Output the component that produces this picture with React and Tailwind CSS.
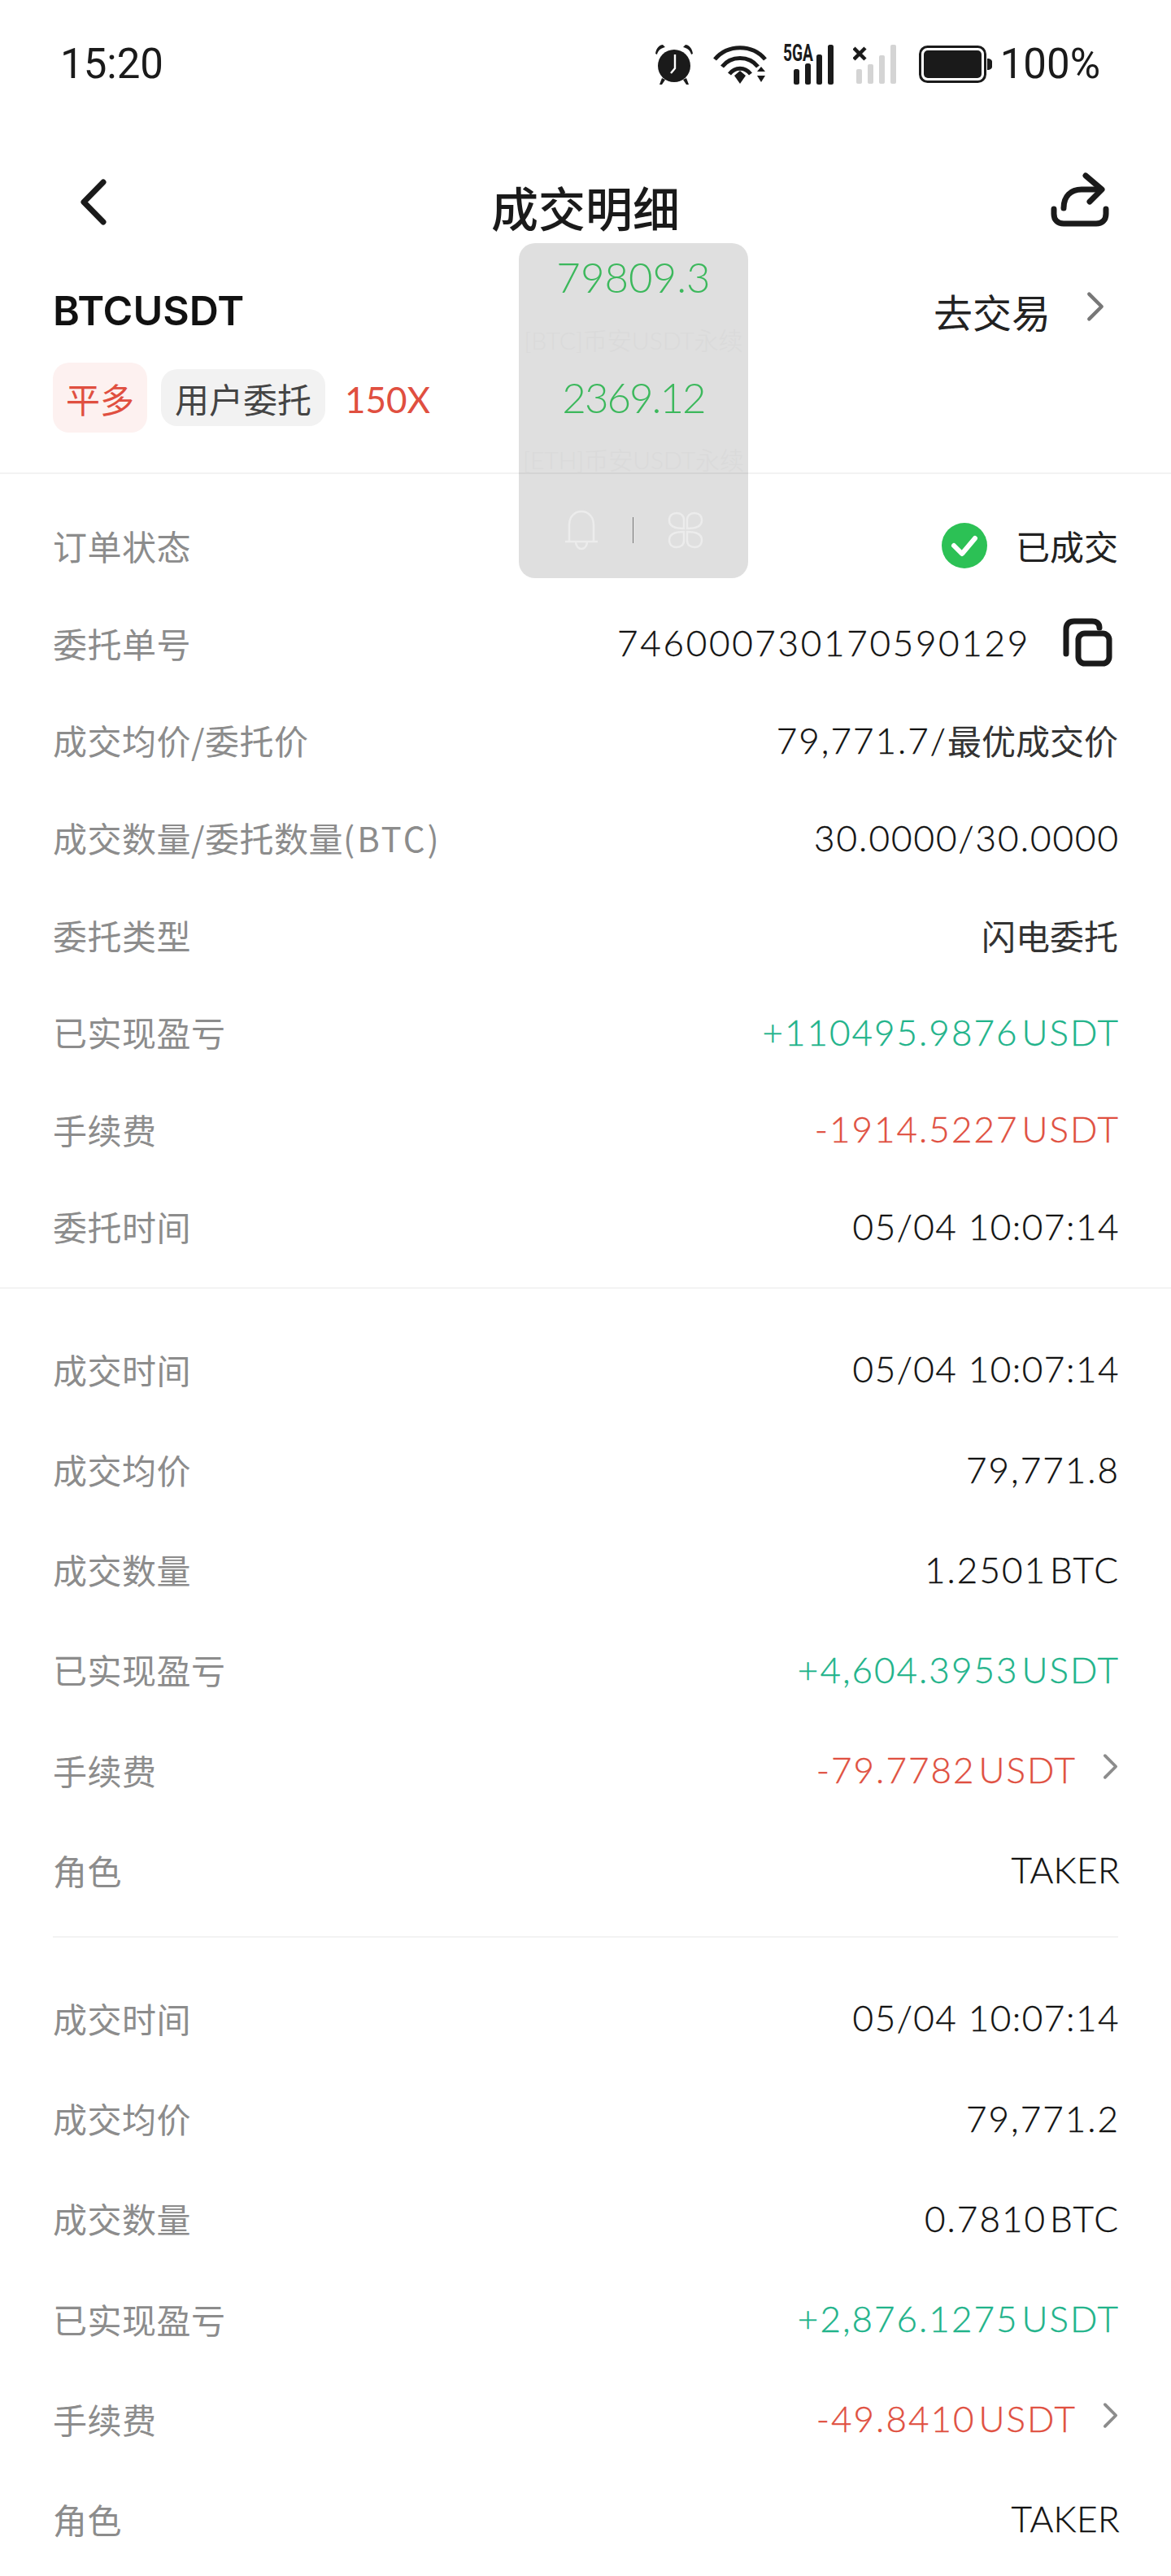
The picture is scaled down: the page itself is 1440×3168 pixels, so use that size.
import React from "react";

const fillGroups = [
  [
    { label: "成交时间", value: "05/04 10:07:14", date: true },
    { label: "成交均价", value: "79,771.8" },
    { label: "成交数量", value: "1.2501 BTC" },
    { label: "已实现盈亏", value: "+4,604.3953 USDT", color: "text-[#20b38a]" },
    { label: "手续费", value: "-79.7782 USDT", color: "text-[#e04f40]", arrow: true },
    { label: "角色", value: "TAKER", tight: true },
  ],
  [
    { label: "成交时间", value: "05/04 10:07:14", date: true },
    { label: "成交均价", value: "79,771.2" },
    { label: "成交数量", value: "0.7810 BTC" },
    { label: "已实现盈亏", value: "+2,876.1275 USDT", color: "text-[#20b38a]" },
    { label: "手续费", value: "-49.8410 USDT", color: "text-[#e04f40]", arrow: true },
    { label: "角色", value: "TAKER", tight: true },
  ],
];

const Chevron = ({ className }) => (
  <svg viewBox="0 0 20 34" className={className} fill="none" stroke="currentColor" strokeWidth="4" strokeLinecap="round" strokeLinejoin="round">
    <path d="M3 3l14 14L3 31" />
  </svg>
);

const Row = ({ label, children, tall }) => (
  <div className={`flex items-center justify-between ${tall ? "h-[123.200px]" : "h-[119.600px]"}`}>
    <span className="text-[42px] tracking-[0.5px] text-[#8c8c8c] font-['Noto_Sans_CJK_SC',sans-serif]">{label}</span>
    <div className="flex items-center">{children}</div>
  </div>
);

const Value = ({ children, color = "text-[#111]", tight, date }) => {
  let spacing = "tracking-[2px] [word-spacing:-10px]";
  if (tight) spacing = "tracking-[0.4px]";
  if (date) spacing = "tracking-[1.500px]";
  return (
    <span className={`text-[44px] font-light [-webkit-text-stroke:0.35px] -mr-[2px] ${spacing} ${color}`}>{children}</span>
  );
};

const StatusBar = () => (
  <div className="flex items-center justify-between h-[158px] pl-[74px] pr-[87px] text-[#1a1a1a] font-['Roboto',sans-serif]">
    <span className="text-[51px]">15:20</span>
    <div className="flex items-center">
      {/* alarm */}
      <svg viewBox="0 0 50 50" className="w-[50px] h-[50px] mr-[23px]" fill="#1a1a1a">
        <ellipse cx="25" cy="27" rx="20" ry="20" />
        <path d="M2 12C3 5 7 1 11 1l3 3C9 5 5 8 4 13zM48 12C47 5 43 1 39 1l-3 3C41 5 45 8 46 13z" />
        <path d="M10 42l-3 8h3l4-6zM40 42l3 8h-3l-4-6z" />
        <path d="M26 13v17l-5 6" fill="none" stroke="#fff" strokeWidth="2.400" />
      </svg>
      {/* wifi */}
      <svg viewBox="0 0 68 48" className="w-[68px] h-[48px] mr-[18px]" fill="none" stroke="#1a1a1a" strokeWidth="5">
        <path d="M2 18C18 -1 48 -1 64 18" />
        <path d="M11 27C22 13 44 13 55 27" />
        <path d="M20 36C27 27 39 27 46 36" />
        <path d="M26 38l7-6 7 6-7 10z" fill="#1a1a1a" stroke="none" />
        <path d="M54 33l5-6 5 6zM54 38l5 8 5-8z" fill="#1a1a1a" stroke="none" />
      </svg>
      {/* 5GA signal */}
      <svg viewBox="0 -12 64 62" className="w-[64px] h-[62px] -mt-[12px] mr-[22px]" fill="#1a1a1a">
        <text x="0" y="21" fontSize="29" fontWeight="700" textLength="37" lengthAdjust="spacingAndGlyphs" fontFamily="Roboto">5GA</text>
        <rect x="13" y="31" width="7" height="19" rx="2.500" />
        <rect x="27" y="24" width="7" height="26" rx="2.500" />
        <rect x="41" y="13" width="7" height="37" rx="2.500" />
        <rect x="55" y="1" width="7" height="49" rx="2.500" />
      </svg>
      {/* no signal */}
      <svg viewBox="0 0 54 48" className="w-[54px] h-[48px] mr-[27px]" fill="#d4d4d4">
        <path d="M1 4l14 14M15 4L1 18" stroke="#1a1a1a" strokeWidth="4.500" />
        <rect x="4" y="30" width="7" height="18" rx="2" />
        <rect x="18" y="24" width="7" height="24" rx="2" />
        <rect x="32" y="13" width="7" height="35" rx="2" />
        <rect x="46" y="0" width="7" height="48" rx="2" />
      </svg>
      {/* battery */}
      <svg viewBox="0 0 90 46" className="w-[90px] h-[46px] mr-[10px]" fill="none">
        <rect x="1.500" y="1.500" width="80" height="43" rx="9" stroke="#1a1a1a" strokeWidth="3" />
        <rect x="6" y="6" width="71" height="34" rx="5" fill="#1a1a1a" />
        <path d="M84 16c4 0 6 2 6 4v6c0 2-2 4-6 4z" fill="#1a1a1a" />
      </svg>
      <span className="text-[51px]">100%</span>
    </div>
  </div>
);

const NavBar = () => (
  <div className="grid grid-cols-[1fr_auto_1fr] h-[196px] px-[76px] text-[#1a1a1a]">
    <svg viewBox="0 0 33 57" className="w-[33px] h-[57px] mt-[62px] ml-[22px]" fill="none" stroke="currentColor" strokeWidth="7" strokeLinecap="round" strokeLinejoin="round">
      <path d="M29 4L5 28.500l24 24.500" />
    </svg>
    <span className="self-center -mt-[4px] text-[58px] font-medium leading-none font-['Noto_Sans_CJK_SC',sans-serif]">成交明细</span>
    <svg viewBox="0 0 72 67" className="w-[72px] h-[67px] mt-[54px] justify-self-end" fill="none" stroke="currentColor" strokeWidth="7" strokeLinecap="round" strokeLinejoin="round">
      <path d="M4 45v6c0 8 5 12 12 12h40c7 0 12-4 12-12v-6" />
      <path d="M16 44c0-15 9-23 22-23h20" />
      <path d="M43 4l20 17-15 15" />
    </svg>
  </div>
);

const FloatPanel = () => (
  <div className="absolute left-[638px] top-[299px] w-[282px] h-[412px] rounded-[20px] bg-black/[0.125] flex flex-col items-center font-['Lato','Noto_Sans_CJK_SC',sans-serif]">
    <span className="mt-[12px] text-[51px] font-light leading-[60px] text-[#3cb85c]">79809.3</span>
    <span className="mt-[25px] text-[30px] font-light leading-[44px] text-[#dadada] whitespace-nowrap">[BTC]币安USDT永续</span>
    <span className="mt-[19px] text-[51px] font-light tracking-[-2px] leading-[60px] text-[#3cb85c]">2369.12</span>
    <span className="mt-[24px] text-[30px] font-light leading-[44px] text-[#dadada] whitespace-nowrap">[ETH]币安USDT永续</span>
    <div className="flex items-center mt-[40px] gap-[42px]">
      <svg viewBox="0 0 42 50" className="w-[42px] h-[50px]" fill="none" stroke="#ececec" strokeWidth="2.500">
        <path d="M1 39h40M6 39V19C6 9 12 2 21 2s15 7 15 17v20" />
        <path d="M14 39c0 12 14 12 14 0" />
      </svg>
      <div className="w-px h-[32px] bg-[#777]" />
      <svg viewBox="0 0 44 46" className="w-[44px] h-[46px]" fill="none" stroke="#ececec" strokeWidth="2.500">
        <path d="M20 21V10C20 5 16 2 11 2S2 5 2 11s5 10 18 10z" />
        <path d="M24 21V10c0-5 4-8 9-8s9 3 9 9-5 10-18 10z" />
        <path d="M20 25v11c0 5-4 8-9 8s-9-3-9-9 5-10 18-10z" />
        <path d="M24 25v11c0 5 4 8 9 8s9-3 9-9-5-10-18-10z" />
      </svg>
    </div>
  </div>
);

const App = () => {
  return (
    <div className="relative w-[1440px] h-[3168px] overflow-hidden bg-white font-['Lato','Noto_Sans_CJK_SC',sans-serif]">
      <StatusBar />
      <NavBar />

      {/* symbol header */}
      <div className="px-[65px] pb-[49px] border-b-2 border-[#f3f3f3]">
        <div className="flex items-center justify-between h-[56px]">
          <span className="text-[50px] font-semibold text-[#111] font-['Inter',sans-serif]">BTCUSDT</span>
          <div className="flex items-center text-[#222] pr-[17px]">
            <span className="text-[48px] font-['Noto_Sans_CJK_SC',sans-serif]">去交易</span>
            <Chevron className="w-[22px] h-[38px] ml-[44px] -mt-[10px] text-[#777]" />
          </div>
        </div>
        <div className="flex items-center mt-[36px]">
          <span className="flex items-center justify-center w-[116px] h-[86px] rounded-[20px] bg-[#fdf1f0] text-[42px] text-[#e04f40] font-['Noto_Sans_CJK_SC',sans-serif]">平多</span>
          <span className="flex items-center justify-center w-[202px] h-[70px] ml-[17px] rounded-[20px] bg-[#f2f2f2] text-[42px] text-[#444] font-['Noto_Sans_CJK_SC',sans-serif]">用户委托</span>
          <span className="ml-[24px] mt-[4px] text-[44px] text-[#e04f40]">150X</span>
        </div>
      </div>

      {/* order info */}
      <div className="px-[65px] pt-[28px] pb-[15px] border-b-2 border-[#f3f3f3]">
        <Row label="订单状态">
          <svg viewBox="0 0 56 56" className="w-[56px] h-[56px] mr-[35px]">
            <circle cx="28" cy="28" r="28" fill="#2cc155" />
            <path d="M15 28l10 10 16-19" fill="none" stroke="#fff" strokeWidth="6" strokeLinecap="round" strokeLinejoin="round" />
          </svg>
          <span className="text-[42px] text-[#222] font-['Noto_Sans_CJK_SC',sans-serif]">已成交</span>
        </Row>
        <Row label="委托单号">
          <span className="text-[44px] font-light [-webkit-text-stroke:0.35px] tracking-[2.700px] text-[#111]">746000730170590129</span>
          <svg viewBox="0 0 61 60" className="w-[61px] h-[60px] ml-[40px] mr-[7px]" fill="none" stroke="#1a1a1a" strokeWidth="7" strokeLinecap="round" strokeLinejoin="round">
            <path d="M4 44V14C4 7 8 4 14 4h22c5 0 9 2 9 8" />
            <rect x="19" y="19" width="38" height="37" rx="8" />
          </svg>
        </Row>
        <Row label="成交均价/委托价">
          <div className="flex items-center">
            <span className="text-[44px] font-light [-webkit-text-stroke:0.35px] tracking-[2px] text-[#111]">79,771.7/</span>
            <span className="text-[42px] text-[#333] font-['Noto_Sans_CJK_SC',sans-serif]">最优成交价</span>
          </div>
        </Row>
        <Row label={<>成交数量/委托数量<span className="tracking-[3px]">(BTC)</span></>}>
          <Value>30.0000/30.0000</Value>
        </Row>
        <Row label="委托类型">
          <span className="text-[42px] text-[#333] font-['Noto_Sans_CJK_SC',sans-serif]">闪电委托</span>
        </Row>
        <Row label="已实现盈亏">
          <Value color="text-[#20b38a]">+110495.9876 USDT</Value>
        </Row>
        <Row label="手续费">
          <Value color="text-[#e04f40]">-1914.5227 USDT</Value>
        </Row>
        <Row label="委托时间">
          <Value date>05/04 10:07:14</Value>
        </Row>
      </div>

      {/* fills */}
      <div className="px-[65px] pt-[37px]">
        {fillGroups.map((group, i) => (
          <div key={i} className={i > 0 ? "border-t-2 border-[#f3f3f3] mt-[20px] pt-[37px]" : ""}>
            {group.map((row) => (
              <Row key={row.label} label={row.label} tall>
                <Value color={row.color} tight={row.tight} date={row.date}>{row.value}</Value>
                {row.arrow && <Chevron className="w-[19px] h-[33px] ml-[34px] -mt-[8px] text-[#8c8c8c]" />}
              </Row>
            ))}
          </div>
        ))}
      </div>

      <FloatPanel />
    </div>
  );
};

export default App;
